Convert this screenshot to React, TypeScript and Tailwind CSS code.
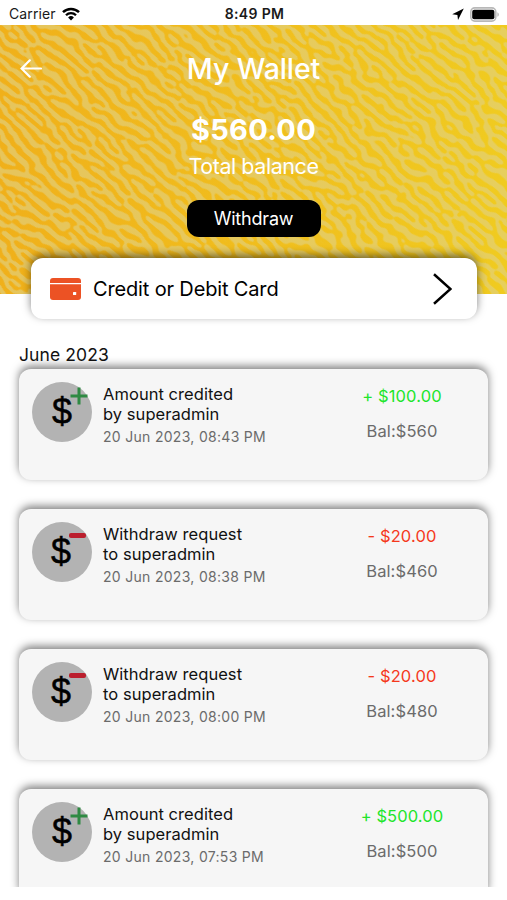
import { clsx } from "clsx";

type Transaction = {
  type: "credit" | "debit";
  title: string;
  party: string;
  date: string;
  amount: string;
  balance: string;
};

const transactions: Transaction[] = [
  {
    type: "credit",
    title: "Amount credited",
    party: "by superadmin",
    date: "20 Jun 2023, 08:43 PM",
    amount: "+ $100.00",
    balance: "Bal:$560",
  },
  {
    type: "debit",
    title: "Withdraw request",
    party: "to superadmin",
    date: "20 Jun 2023, 08:38 PM",
    amount: "- $20.00",
    balance: "Bal:$460",
  },
  {
    type: "debit",
    title: "Withdraw request",
    party: "to superadmin",
    date: "20 Jun 2023, 08:00 PM",
    amount: "- $20.00",
    balance: "Bal:$480",
  },
  {
    type: "credit",
    title: "Amount credited",
    party: "by superadmin",
    date: "20 Jun 2023, 07:53 PM",
    amount: "+ $500.00",
    balance: "Bal:$500",
  },
];

function StatusBar() {
  return (
    <div className="grid h-[25px] grid-cols-3 items-center bg-white pl-[9px] pr-[7px] pt-[3px] text-[#1a1a1a]">
      <div className="flex items-center gap-[6px]">
        <span className="text-[14px] leading-none tracking-[0.1px]">Carrier</span>
        <svg viewBox="0 0 18 14" className="h-[14px] w-[18px]" fill="none" stroke="#000">
          <path d="M1 5.2a11.4 11.4 0 0 1 16 0" strokeWidth="2.5" />
          <path d="M4 8.3a7 7 0 0 1 10 0" strokeWidth="2.3" />
          <path d="M9 13.4 6.1 10.5a4.1 4.1 0 0 1 5.8 0Z" fill="#000" stroke="none" />
        </svg>
      </div>
      <span className="text-center text-[14px] font-semibold leading-none tracking-[0.35px]">
        8:49 PM
      </span>
      <div className="flex items-center justify-end gap-[5px]">
        <svg viewBox="0 0 12 12" className="h-[12px] w-[12px]">
          <path d="M11.8.6.2 6.2l5.2.7.6 5Z" fill="#000" />
        </svg>
        <svg viewBox="0 0 31 15" className="h-[15px] w-[31px]">
          <rect x="1.8" y=".9" width="25" height="13.2" rx="4" fill="#fff" stroke="#b8b8b8" strokeWidth="1.6" />
          <rect x="3.2" y="2.7" width="22.2" height="9.6" rx="2" fill="#000" />
          <path d="M28.4 5.2c2 .9 2 3.7 0 4.6Z" fill="#b8b8b8" />
        </svg>
      </div>
    </div>
  );
}

// Labyrinth texture: noise pushed through a few blur / sharpen passes
function HeaderPattern() {
  return (
    <svg viewBox="0 0 507 269" className="absolute inset-0 h-full w-full">
      <defs>
        <filter
          id="maze"
          filterUnits="userSpaceOnUse"
          x="-400"
          y="-400"
          width="800"
          height="800"
          colorInterpolationFilters="sRGB"
        >
          <feTurbulence type="fractalNoise" baseFrequency="0.08 0.13" numOctaves="1" seed="11" />
          <feColorMatrix values="0 0 0 0 0  0 0 0 0 0  0 0 0 0 0  3 0 0 0 -1" result="n" />
          <feGaussianBlur in="n" stdDeviation="1.5 1.3" result="a1" />
          <feGaussianBlur in="n" stdDeviation="2.7 2.6" result="b1" />
          <feComposite in="a1" in2="b1" operator="arithmetic" k2="10" k3="-10" k4="0.5" result="c1" />
          <feGaussianBlur in="c1" stdDeviation="1.6 1.3" result="a2" />
          <feGaussianBlur in="c1" stdDeviation="2.7 2.6" result="b2" />
          <feComposite in="a2" in2="b2" operator="arithmetic" k2="6" k3="-6" k4="0.5" result="c2" />
          <feGaussianBlur in="c2" stdDeviation="1.6 1.3" result="a3" />
          <feGaussianBlur in="c2" stdDeviation="2.7 2.6" result="b3" />
          <feComposite in="a3" in2="b3" operator="arithmetic" k2="6" k3="-6" k4="0.5" result="c3" />
          <feGaussianBlur in="c3" stdDeviation="1.6 1.3" result="a4" />
          <feGaussianBlur in="c3" stdDeviation="2.7 2.6" result="b4" />
          <feComposite in="a4" in2="b4" operator="arithmetic" k2="6" k3="-6" k4="0.5" result="c4" />
          <feGaussianBlur in="c4" stdDeviation="1.5 1.3" result="a5" />
          <feGaussianBlur in="c4" stdDeviation="2.7 2.6" result="b5" />
          <feComposite in="a5" in2="b5" operator="arithmetic" k2="5" k3="-5" k4="0.5" />
          <feGaussianBlur stdDeviation="0.6" />
          <feColorMatrix values="0 0 0 0 0.88  0 0 0 0 0.82  0 0 0 0 0.52  0 0 0 0.62 0" />
        </filter>
      </defs>
      <g transform="translate(253 134) rotate(40)">
        <rect x="-400" y="-400" width="800" height="800" filter="url(#maze)" />
      </g>
    </svg>
  );
}

function TransactionIcon({ type }: { type: Transaction["type"] }) {
  return (
    <div className="relative flex h-[60px] w-[60px] shrink-0 items-center justify-center rounded-full bg-[#b3b3b3]">
      <span
        className={clsx(
          "font-['Liberation_Sans',sans-serif] text-[36px] leading-none text-black [-webkit-text-stroke:0.5px_black]",
          type === "debit" && "-translate-x-px",
        )}
      >
        $
      </span>
      {type === "credit" ? (
        <svg viewBox="0 0 18 18" className="absolute left-[38px] top-[5px] h-[18px] w-[18px]">
          <path d="M9 .5v17M.5 9h17" stroke="#2f8a43" strokeWidth="3" />
        </svg>
      ) : (
        <span className="absolute left-[37px] top-[11px] h-[5px] w-[17px] rounded-[2px] bg-[#bb1e2d]" />
      )}
    </div>
  );
}

function TransactionCard({ item }: { item: Transaction }) {
  return (
    <div className="flex h-[111px] shrink-0 rounded-[12px] bg-[#f6f6f6] pl-[13px] pt-[13px] shadow-[0_-3px_8px_rgba(0,0,0,0.5)]">
      <TransactionIcon type={item.type} />
      <div className="ml-[11px] w-[210px] shrink-0 pt-[2px]">
        <p className="text-[16.5px] leading-[20px] tracking-[0.05px] text-[#111]">
          {item.title}
          <br />
          {item.party}
        </p>
        <p className="mt-[4px] text-[14px] leading-[18px] tracking-[0.3px] text-[#6b6b6b]">{item.date}</p>
      </div>
      <div className="ml-[3px] w-[172px] text-center">
        <p
          className={clsx(
            "pt-[3px] text-[16.5px] leading-[22px] tracking-[0.1px]",
            item.type === "credit" ? "text-[#21e52b]" : "text-[#f5391c]",
          )}
        >
          {item.amount}
        </p>
        <p className="mt-[13px] text-[16.5px] leading-[22px] tracking-[0.1px] text-[#6b6b6b]">{item.balance}</p>
      </div>
    </div>
  );
}

export default function App() {
  return (
    <div className="h-[900px] w-[507px] overflow-hidden bg-white font-['Inter',sans-serif]">
      <StatusBar />

      <header className="relative h-[269px] overflow-hidden bg-linear-to-r from-[#f0b01a] to-[#f0cb20]">
        <HeaderPattern />
        <div className="relative flex flex-col items-center text-white">
          <div className="grid h-[87px] w-full grid-cols-[60px_1fr_60px] items-center">
            <svg viewBox="0 0 22 20" className="ml-[20px] h-[20px] w-[22px]" fill="none" stroke="#fff" strokeWidth="2.2" strokeLinecap="round">
              <path d="M21 9.5H1.8M9.8 1.3 1.6 9.5l8.2 8.2" />
            </svg>
            <h1 className="pt-[2px] text-center text-[28.5px] font-[550] leading-none tracking-[-0.1px]">My Wallet</h1>
          </div>
          <p className="text-[29px] font-bold leading-[36px] tracking-[0.3px]">$560.00</p>
          <p className="mt-[4px] text-[21.5px] leading-[28px] tracking-[-0.45px]">Total balance</p>
          <button className="mt-[20px] h-[37px] w-[134px] rounded-[12px] bg-black text-[18px] leading-none tracking-[-0.2px]">
            Withdraw
          </button>
        </div>
      </header>

      <button className="relative -mt-[36px] ml-[31px] flex h-[61px] w-[446px] items-center rounded-[12px] bg-white pl-[19px] pr-[25px] shadow-[0_-3px_8px_rgba(0,0,0,0.5)]">
        <svg viewBox="0 0 31 22" className="h-[22px] w-[31px]">
          <path d="M0 5V3a3 3 0 0 1 3-3h25a3 3 0 0 1 3 3v2Z" fill="#ec5224" />
          <path d="M0 6.3h31V19a3 3 0 0 1-3 3H3a3 3 0 0 1-3-3Z" fill="#ec5224" />
          <rect x="23" y="14" width="3.2" height="3" rx=".6" fill="#fff" />
        </svg>
        <span className="ml-[12px] text-[20px] leading-none tracking-[-0.15px] text-black">
          Credit or Debit Card
        </span>
        <svg viewBox="0 0 20 32" className="ml-auto h-[32px] w-[20px]" fill="none" stroke="#000" strokeWidth="2.5">
          <path d="M2 1.2 18.5 16 2 30.8" />
        </svg>
      </button>

      <main className="mt-[25px] h-[543px] overflow-hidden px-[19px]">
        <h2 className="h-[25px] text-[17.5px] leading-[22px] tracking-[0.1px] text-[#111]">June 2023</h2>
        <div className="flex flex-col gap-[29px]">
          {transactions.map((item) => (
            <TransactionCard key={item.date} item={item} />
          ))}
        </div>
      </main>
    </div>
  );
}
